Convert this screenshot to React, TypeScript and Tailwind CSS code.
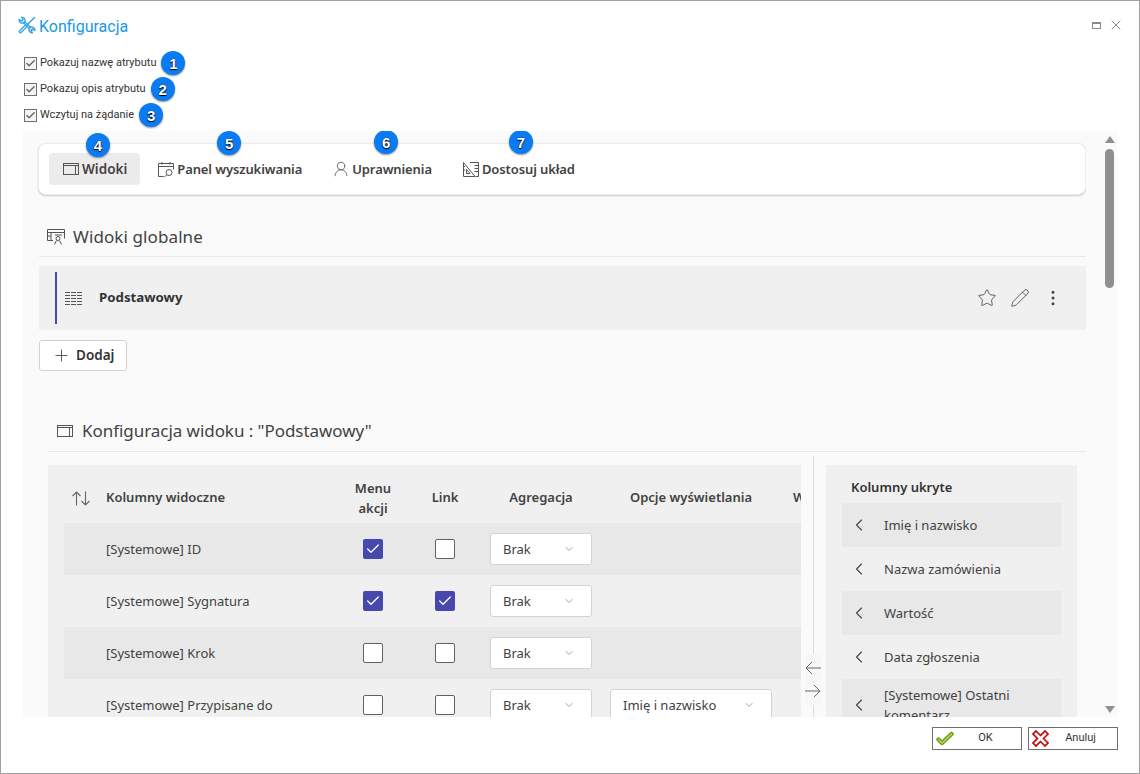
import React from "react";
import { Star, Pencil, EllipsisVertical, Plus, ChevronLeft, ChevronDown, UserRound, X, Check } from "lucide-react";

function Badge({ n, className }: { n: number; className?: string }) {
  return (
    <span
      className={"flex h-6 w-6 items-center justify-center rounded-full bg-[#0a7bf2] text-[15px] font-bold leading-none text-white shadow-[0_1px_2px_rgba(0,0,0,0.45)] [font-family:'Liberation_Sans',sans-serif] [text-shadow:0_0_1px_#000,0_1px_1px_#000] " + (className ?? "")}
    >
      {n}
    </span>
  );
}

function OptionRow({ label, n }: { label: string; n: number }) {
  return (
    <div className="flex h-[26px] items-center">
      <span className="flex h-[13px] w-[13px] items-center justify-center border border-[#707070] bg-[#f4f4f4]">
        <Check size={11} strokeWidth={3} className="text-[#666]" />
      </span>
      <span className="ml-[3px] text-[11px] text-[#333] [font-family:Roboto,sans-serif]">{label}</span>
      <Badge n={n} className="ml-[5px]" />
    </div>
  );
}

function ToolsIcon({ className }: { className?: string }) {
  return (
    <svg viewBox="0 0 18 18" className={className} fill="none" strokeLinecap="round" strokeLinejoin="round">
      {/* wrench */}
      <path d="M5 5L13.5 13.5" stroke="#2a9fe6" strokeWidth="3" />
      <path d="M5 5L13.5 13.5" stroke="#cfeafb" strokeWidth="1" />
      <path d="M1 3.5A3.5 3.5 0 0 0 5.5 7L7 5.5A3.5 3.5 0 0 0 3.5 1L5 3.5L3.5 5Z" stroke="#2a9fe6" strokeWidth="1.2" fill="#cfeafb" />
      <path d="M17 14.5A3.5 3.5 0 0 0 12.5 11L11 12.5A3.5 3.5 0 0 0 14.5 17L13 14.5L14.5 13Z" stroke="#2a9fe6" strokeWidth="1.2" fill="#cfeafb" />
      {/* screwdriver */}
      <path d="M16.5 1.5L8 10" stroke="#2a9fe6" strokeWidth="1.4" />
      <path d="M7.5 10.5L2.5 15.5" stroke="#2a9fe6" strokeWidth="3.6" />
      <path d="M7.5 10.5L2.5 15.5" stroke="#cfeafb" strokeWidth="1.2" />
    </svg>
  );
}

function ViewIcon({ className }: { className?: string }) {
  return (
    <svg viewBox="0 0 16 12" className={className} fill="none" stroke="currentColor" strokeWidth="1">
      <rect x="0.5" y="0.5" width="15" height="11" />
      <path d="M0.5 2.5H15.5M12.5 2.5V11.5" />
    </svg>
  );
}

function CalendarSearchIcon({ className }: { className?: string }) {
  return (
    <svg viewBox="0 0 16 17" className={className} fill="none" stroke="currentColor" strokeWidth="1">
      <path d="M5.5 15.5H0.5V2.5H15.5V8.5" />
      <path d="M0.5 5.5H15.5M4 1V3.5M12 1V3.5" />
      <circle cx="11" cy="11.5" r="3" />
      <path d="M8.8 13.7L6 16.5" />
    </svg>
  );
}

function LayoutIcon({ className }: { className?: string }) {
  return (
    <svg viewBox="0 0 16 15" className={className} fill="none" stroke="currentColor" strokeWidth="1">
      <path d="M0.5 0.5V14.5H12L0.5 0.5Z" />
      <path d="M3.5 7.5V11.5H7Z" />
      <path d="M7 0.5H15.5V14.5H12.5" />
      <path d="M11.5 3.5H15M11.5 6.5H15M11.5 9.5H15M0.5 4.5H2M0.5 8H2" />
    </svg>
  );
}

function GlobalViewIcon({ className }: { className?: string }) {
  return (
    <svg viewBox="0 0 18 16" className={className} fill="none" stroke="currentColor" strokeWidth="1">
      <path d="M6 11.5H0.5V0.5H17.5V9.5" />
      <path d="M0.5 3.5H17.5M4 3.5V11.5M0.5 7H4M8 6H15" />
      <circle cx="11" cy="9.5" r="2" />
      <path d="M7.5 15.5L9.5 11.5M14.5 15.5L12.5 11.5" />
    </svg>
  );
}

function ListIcon({ className }: { className?: string }) {
  return (
    <svg viewBox="0 0 17 13" className={className} fill="none" stroke="currentColor" strokeWidth="1">
      <path d="M0 0.5H17M0 3.5H17M0 6.5H17M0 9.5H17M0 12.5H17" />
      <path d="M5.5 0V13M11.5 0V13" stroke="#f0f0f0" strokeWidth="1" />
    </svg>
  );
}

function SortIcon({ className }: { className?: string }) {
  return (
    <svg viewBox="0 0 18 15" className={className} fill="none" stroke="currentColor" strokeWidth="1.1">
      <path d="M4.5 14.5V1M0.5 5L4.5 1L8.5 5" />
      <path d="M13.5 0.5V14M9.5 10L13.5 14L17.5 10" />
    </svg>
  );
}

function ArrowIcon({ dir }: { dir: "left" | "right" }) {
  return (
    <svg viewBox="0 0 16 14" className="h-[14px] w-4" fill="none" stroke="currentColor" strokeWidth="1">
      {dir === "left" ? <path d="M16 7H1M7 1L1 7L7 13" /> : <path d="M0 7H15M9 1L15 7L9 13" />}
    </svg>
  );
}

function Tab({ icon, label, n, badgeClass, active }: { icon: React.ReactNode; label: string; n: number; badgeClass: string; active?: boolean }) {
  return (
    <div className={"relative flex h-8 items-center gap-[3px] rounded-[4px] font-semibold text-[#424242] " + (active ? "bg-[#ececec] pl-[14px] pr-[13px] text-[13.5px]" : "px-[13px] text-[13px] tracking-[-0.1px]")}>
      {icon}
      <span className="pt-px">{label}</span>
      <Badge n={n} className={"absolute " + badgeClass} />
    </div>
  );
}

function CheckBox({ on }: { on?: boolean }) {
  return on ? (
    <span className="flex h-5 w-5 items-center justify-center rounded-[2px] bg-[#4648ad]">
      <Check size={16} strokeWidth={2} className="text-white" />
    </span>
  ) : (
    <span className="block h-5 w-5 rounded-[2px] border border-[#616161] bg-white" />
  );
}

function Select({ value, wide }: { value: string; wide?: boolean }) {
  return (
    <div className={"flex h-8 items-center justify-between rounded-[3px] border border-[#d4d4d4] bg-white pl-3 pr-[16px] text-[13px] text-[#424242] " + (wide ? "w-[162px]" : "w-[102px]")}>
      <span className="pt-px">{value}</span>
      <ChevronDown size={12} strokeWidth={1.2} className="text-[#666]" />
    </div>
  );
}

const rows = [
  { name: "[Systemowe] ID", menu: true, link: false, shade: true },
  { name: "[Systemowe] Sygnatura", menu: true, link: true, shade: false },
  { name: "[Systemowe] Krok", menu: false, link: false, shade: true },
  { name: "[Systemowe] Przypisane do", menu: false, link: false, shade: false, option: "Imię i nazwisko" },
];

const hidden = ["Imię i nazwisko", "Nazwa zamówienia", "Wartość", "Data zgłoszenia"];

const gridCols = "grid grid-cols-[42px_231px_72px_72px_120px_180px_60px] items-center";

export default function App() {
  return (
    <div className="flex h-[774px] w-[1140px] flex-col overflow-hidden border border-[#a0a0a0] bg-white text-[#424242] [font-family:'Noto_Sans','Liberation_Sans',sans-serif]">
      {/* title bar */}
      <div className="flex h-12 shrink-0 items-center pl-[17px] pr-[15px]">
        <ToolsIcon className="h-[18px] w-[18px]" />
        <span className="ml-[3px] pt-[3px] text-[16px] text-[#1c97e6] [font-family:Roboto,sans-serif]">Konfiguracja</span>
        <div className="ml-auto flex items-center gap-[7px] text-[#8a8a8a]">
          <span className="h-[7px] w-[9px] border border-t-2 border-[#8a8a8a]" />
          <X size={16} strokeWidth={1.5} />
        </div>
      </div>

      {/* options */}
      <div className="flex shrink-0 flex-col pl-[23px] pt-px">
        <OptionRow label="Pokazuj nazwę atrybutu" n={1} />
        <OptionRow label="Pokazuj opis atrybutu" n={2} />
        <OptionRow label="Wczytuj na żądanie" n={3} />
      </div>

      {/* scrolling panel */}
      <div className="ml-[22px] mt-[3px] flex h-[586px] w-[1094px] shrink-0 overflow-hidden bg-[#fafafa]">
        <div className="w-[1063px] shrink-0 overflow-hidden pl-[15px] pt-3">
          {/* tabs */}
          <div className="flex h-[52px] items-center gap-[5px] rounded-lg border border-[#ededed] bg-white pl-[10px] shadow-[0_1px_2px_rgba(0,0,0,0.2)]">
            <Tab active icon={<ViewIcon className="h-3 w-4 shrink-0 text-[#555]" />} label="Widoki" n={4} badgeClass="left-[37px] top-[-20px]" />
            <Tab icon={<CalendarSearchIcon className="h-[17px] w-4 shrink-0 text-[#555]" />} label="Panel wyszukiwania" n={5} badgeClass="left-[72px] top-[-22px]" />
            <Tab icon={<UserRound size={18} strokeWidth={1.1} className="-mx-px shrink-0 text-[#555]" />} label="Uprawnienia" n={6} badgeClass="left-[54px] top-[-23px]" />
            <Tab icon={<LayoutIcon className="h-[15px] w-4 shrink-0 text-[#555]" />} label="Dostosuj układ" n={7} badgeClass="left-[59px] top-[-23px]" />
          </div>

          <div className="ml-px">
            {/* global views */}
            <div className="mt-[22px] flex h-10 items-center gap-[8px] border-b border-[#e8e8e8] pl-2 text-[17px] text-[#424242]">
              <GlobalViewIcon className="h-4 w-[18px] text-[#555]" />
              <span className="tracking-[0.1px]">Widoki globalne</span>
            </div>
            <div className="mt-[9px] flex h-16 items-center bg-[#f0f0f0] pl-4 pr-[23px]">
              <span className="h-[52px] w-[2px] bg-[#4648ad]" />
              <ListIcon className="ml-2 h-[13px] w-[17px] text-[#555]" />
              <span className="ml-[17px] text-[13.25px] font-bold text-[#333]">Podstawowy</span>
              <div className="ml-auto flex items-center gap-[13px] text-[#444]">
                <Star size={20} strokeWidth={1} />
                <Pencil size={20} strokeWidth={1} />
                <EllipsisVertical size={20} strokeWidth={1.6} />
              </div>
            </div>
            <button className="mt-[10px] flex h-[31px] w-[88px] items-center gap-[5px] rounded-[3px] border border-[#d1d1d1] bg-white pl-3 text-[13.5px] font-semibold text-[#333]">
              <Plus size={19} strokeWidth={1} />
              Dodaj
            </button>

            {/* view configuration */}
            <div className="ml-[9px] mt-[41px] flex h-10 items-center gap-[9px] border-b border-[#e8e8e8] pb-[2px] pl-[9px] text-[17px] text-[#424242]">
              <ViewIcon className="h-3 w-4 text-[#555]" />
              <span className="tracking-[-0.05px]">Konfiguracja widoku : "Podstawowy"</span>
            </div>

            <div className="ml-[9px] mt-[13px] flex h-[260px]">
              {/* visible columns */}
              <div className="w-[753px] shrink-0 overflow-hidden bg-[#f0f0f0] pl-4">
                <div className={gridCols + " h-[58px] pt-[8px] text-[13px] font-semibold text-[#424242]"}>
                  <SortIcon className="ml-2 h-[15px] w-[18px] text-[#666]" />
                  <span>Kolumny widoczne</span>
                  <span className="text-center leading-5">Menu<br />akcji</span>
                  <span className="text-center">Link</span>
                  <span className="text-center">Agregacja</span>
                  <span className="text-center">Opcje wyświetlania</span>
                  <span className="whitespace-nowrap pl-3">Widok</span>
                </div>
                {rows.map((r) => (
                  <div key={r.name} className={gridCols + " h-[52px] text-[13px] text-[#424242] " + (r.shade ? "bg-[#e8e8e8]" : "")}>
                    <span />
                    <span className="pt-[2px]">{r.name}</span>
                    <div className="flex justify-center"><CheckBox on={r.menu} /></div>
                    <div className="flex justify-center"><CheckBox on={r.link} /></div>
                    <div className="flex justify-center"><Select value="Brak" /></div>
                    <div className="flex justify-center">{r.option ? <Select value={r.option} wide /> : null}</div>
                    <span />
                  </div>
                ))}
              </div>

              {/* move arrows with divider */}
              <div className="relative mt-[-9px] flex h-[261px] w-[25px] shrink-0 items-end justify-start pl-[4px]">
                <span className="absolute bottom-0 left-[12px] top-0 w-px bg-[#dcdcdc]" />
                <div className="relative mb-[12px] flex h-[51px] w-4 flex-col items-center justify-center gap-[9px] bg-[#f7f7f7] text-[#666]">
                  <ArrowIcon dir="left" />
                  <ArrowIcon dir="right" />
                </div>
              </div>

              {/* hidden columns */}
              <div className="w-[251px] shrink-0 overflow-hidden bg-[#f0f0f0] px-4">
                <div className="flex h-[38px] items-center pl-[9px] pt-[8px] text-[13px] font-semibold text-[#333]">Kolumny ukryte</div>
                {hidden.map((h, i) => (
                  <div key={h} className={"flex h-11 items-center pl-[7px] text-[13px] text-[#424242] " + (i % 2 === 0 ? "bg-[#e8e8e8]" : "")}>
                    <ChevronLeft size={20} strokeWidth={1.3} className="shrink-0 text-[#444]" />
                    <span className="ml-[15px] pt-px">{h}</span>
                  </div>
                ))}
                <div className="flex h-[52px] items-center bg-[#e8e8e8] pl-[7px] text-[13px] leading-5 text-[#424242]">
                  <ChevronLeft size={20} strokeWidth={1.3} className="shrink-0 text-[#444]" />
                  <span className="ml-[15px] w-[160px]">[Systemowe] Ostatni komentarz</span>
                </div>
              </div>
            </div>
          </div>
        </div>

        {/* scrollbar */}
        <div className="ml-[19px] flex w-[9px] shrink-0 flex-col items-center pb-1 pt-[5px]">
          <span className="h-0 w-0 border-x-[5px] border-b-[7px] border-x-transparent border-b-[#8f8f8f]" />
          <span className="mt-[6px] h-[139px] w-[9px] rounded-full bg-[#8f8f8f]" />
          <span className="mt-auto h-0 w-0 border-x-[5px] border-t-[7px] border-x-transparent border-t-[#8f8f8f]" />
        </div>
      </div>

      {/* footer */}
      <div className="flex flex-1 items-start justify-end gap-[6px] pr-[21px] pt-[10px] [font-family:Roboto,sans-serif]">
        <button className="flex h-[23px] w-[90px] items-center border border-[#707070] bg-white pl-[3px] text-[11px] text-[#333]">
          <svg viewBox="0 0 18 15" className="h-[15px] w-[18px]" fill="none" strokeLinejoin="round" strokeLinecap="round">
            <path d="M2.5 8.5L6 12L15.5 3" stroke="#6f9e12" strokeWidth="4.4" />
            <path d="M2.5 8.5L6 12L15.5 3" stroke="#b9d970" strokeWidth="1.4" />
          </svg>
          <span className="flex-1 pr-[4px] text-center">OK</span>
        </button>
        <button className="flex h-[23px] w-[90px] items-center border border-[#707070] bg-white pl-[3px] text-[11px] text-[#333]">
          <svg viewBox="0 0 17 17" className="h-[17px] w-[17px]" fill="none" strokeLinejoin="miter">
            <path d="M4 4L13 13M13 4L4 13" stroke="#cc0a0a" strokeWidth="6" strokeLinecap="square" />
            <path d="M4 4L13 13M13 4L4 13" stroke="#ffffff" strokeWidth="2.6" strokeLinecap="square" />
          </svg>
          <span className="flex-1 pr-[8px] pl-[3px] text-center">Anuluj</span>
        </button>
      </div>
    </div>
  );
}
